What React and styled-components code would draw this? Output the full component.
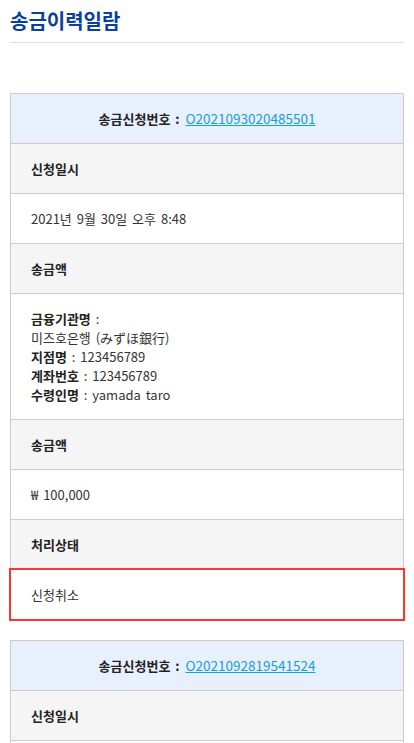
import React from "react";
import styled, { createGlobalStyle } from "styled-components";

const Global = createGlobalStyle`
  html, body { margin: 0; padding: 0; background: #fff; }
  body { font-family: "Noto Sans CJK KR", "Noto Sans", sans-serif; color: #333; }
`;

const Page = styled.div`
  padding: 0 10px 20px;
`;

const Header = styled.header`
  padding: 9px 0 9px;
  border-bottom: 1px solid #dddddd;
  margin-bottom: 50px;
`;

const Title = styled.h1`
  margin: 0;
  font-size: 20px;
  line-height: 24px;
  font-weight: 700;
  color: #0a3f9f;
`;

const Card = styled.section`
  border: 1px solid #cccccc;
  margin-bottom: 20px;
`;

const Row = styled.div`
  padding: 15px 20px;
  font-size: 13px;
  line-height: 19px;
  word-spacing: 2px;
  border-top: ${(p) => (p.$first ? "none" : "1px solid #cccccc")};
  background: ${(p) =>
    p.$kind === "head" ? "#e8effd" : p.$kind === "label" ? "#f5f5f5" : "#ffffff"};
  color: ${(p) => (p.$kind === "value" ? "#333333" : "#222222")};
  font-weight: ${(p) => (p.$kind === "label" ? 600 : 400)};
  text-align: ${(p) => (p.$kind === "head" ? "center" : "left")};
  position: relative;
  ${(p) =>
    p.$alert
      ? `outline: 2px solid #ff3333; outline-offset: -1px; margin: 0 -1px -1px -1px; padding: 15px 21px 16px 21px; z-index: 1;`
      : ""}
`;

const HeadLabel = styled.span`
  font-weight: 600;
  color: #222;
  margin-right: 6px;
`;

const Link = styled.a`
  color: #14a0dc;
  font-size: 13.5px;
  text-decoration: underline;
  cursor: pointer;
`;

const B = styled.span`
  font-weight: 600;
  color: #222;
`;

const Line = styled.div``;

const data = [
  {
    no: "O2021093020485501",
    date: "2021년 9월 30일 오후 8:48",
    bank: "미즈호은행 (みずほ銀行)",
    branch: "123456789",
    account: "123456789",
    name: "yamada taro",
    amount: "₩ 100,000",
    status: "신청취소",
  },
  {
    no: "O2021092819541524",
    date: "2021년 9월 28일 오후 7:54",
    bank: "미즈호은행 (みずほ銀行)",
    branch: "123456789",
    account: "123456789",
    name: "yamada taro",
    amount: "₩ 100,000",
    status: "신청취소",
  },
];

export default function App() {
  return (
    <>
      <Global />
      <Page>
        <Header>
          <Title>송금이력일람</Title>
        </Header>
        {data.map((d) => (
          <Card key={d.no}>
            <Row $kind="head" $first>
              <HeadLabel>송금신청번호 :</HeadLabel>
              <Link>{d.no}</Link>
            </Row>
            <Row $kind="label">신청일시</Row>
            <Row $kind="value">{d.date}</Row>
            <Row $kind="label">송금액</Row>
            <Row $kind="value">
              <Line>
                <B>금융기관명</B> :
              </Line>
              <Line>{d.bank}</Line>
              <Line>
                <B>지점명</B> : {d.branch}
              </Line>
              <Line>
                <B>계좌번호</B> : {d.account}
              </Line>
              <Line>
                <B>수령인명</B> : {d.name}
              </Line>
            </Row>
            <Row $kind="label">송금액</Row>
            <Row $kind="value">{d.amount}</Row>
            <Row $kind="label">처리상태</Row>
            <Row $kind="value" $alert>
              {d.status}
            </Row>
          </Card>
        ))}
      </Page>
    </>
  );
}
